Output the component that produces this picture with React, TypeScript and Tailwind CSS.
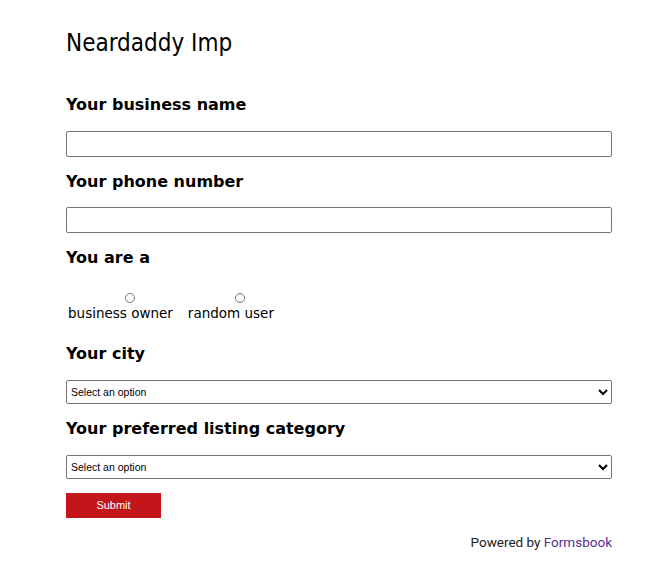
export default function App() {
  const labelCls = "font-['DejaVu_Sans',sans-serif] font-bold text-[16px] leading-[20px] text-black";
  const inputCls = 'block w-full h-[26px] border border-[#767676] rounded-[2px] bg-white px-1';
  const selectCls =
    "block w-full h-[24px] border border-[#767676] rounded-[2px] bg-white pl-0 font-['Liberation_Sans',Arial,sans-serif] text-[10.5px] text-black";

  return (
    <div className="min-h-[588px] w-[670px] bg-white">
      <div className="ml-[66px] w-[546px] pt-[26px]">
        <h1 className="font-['Liberation_Sans_Narrow','DejaVu_Sans_Condensed',sans-serif] text-[24px] leading-[34px] text-black">
          Neardaddy Imp
        </h1>

        <form className="mt-[35px]" onSubmit={(e) => e.preventDefault()}>
          <label className={labelCls + ' block'}>Your business name</label>
          <input type="text" className={inputCls + ' mt-[16px]'} />

          <label className={labelCls + ' block mt-[15px]'}>Your phone number</label>
          <input type="text" className={inputCls + ' mt-[15px]'} />

          <label className={labelCls + ' block mt-[15px]'}>You are a</label>
          <div className="mt-[25px] flex gap-[15px] pl-[2px] font-['DejaVu_Sans',sans-serif] text-[13.5px] leading-[17px] text-black">
            <label className="flex flex-col items-center">
              <input type="radio" name="role" className="m-0 w-[10px] h-[10px] ml-[19px]" />
              <span className="mt-[2px]">business owner</span>
            </label>
            <label className="flex flex-col items-center">
              <input type="radio" name="role" className="m-0 w-[10px] h-[10px] ml-[18px]" />
              <span className="mt-[2px]">random user</span>
            </label>
          </div>

          <label className={labelCls + ' block mt-[22px]'}>Your city</label>
          <select className={selectCls + ' mt-[16px]'} defaultValue="">
            <option value="">Select an option</option>
          </select>

          <label className={labelCls + ' block mt-[15px]'}>Your preferred listing category</label>
          <select className={selectCls + ' mt-[16px]'} defaultValue="">
            <option value="">Select an option</option>
          </select>

          <button
            type="submit"
            className="mt-[14px] block w-[95px] h-[25px] bg-[#c2161b] text-white font-['Liberation_Sans',Arial,sans-serif] text-[11px]"
          >
            Submit
          </button>
        </form>

        <p className="mt-[15px] text-right font-['Roboto',sans-serif] text-[13.5px] leading-[18px] text-[#222]">
          Powered by <a className="text-[#5b2d8e]">Formsbook</a>
        </p>
      </div>
    </div>
  );
}
